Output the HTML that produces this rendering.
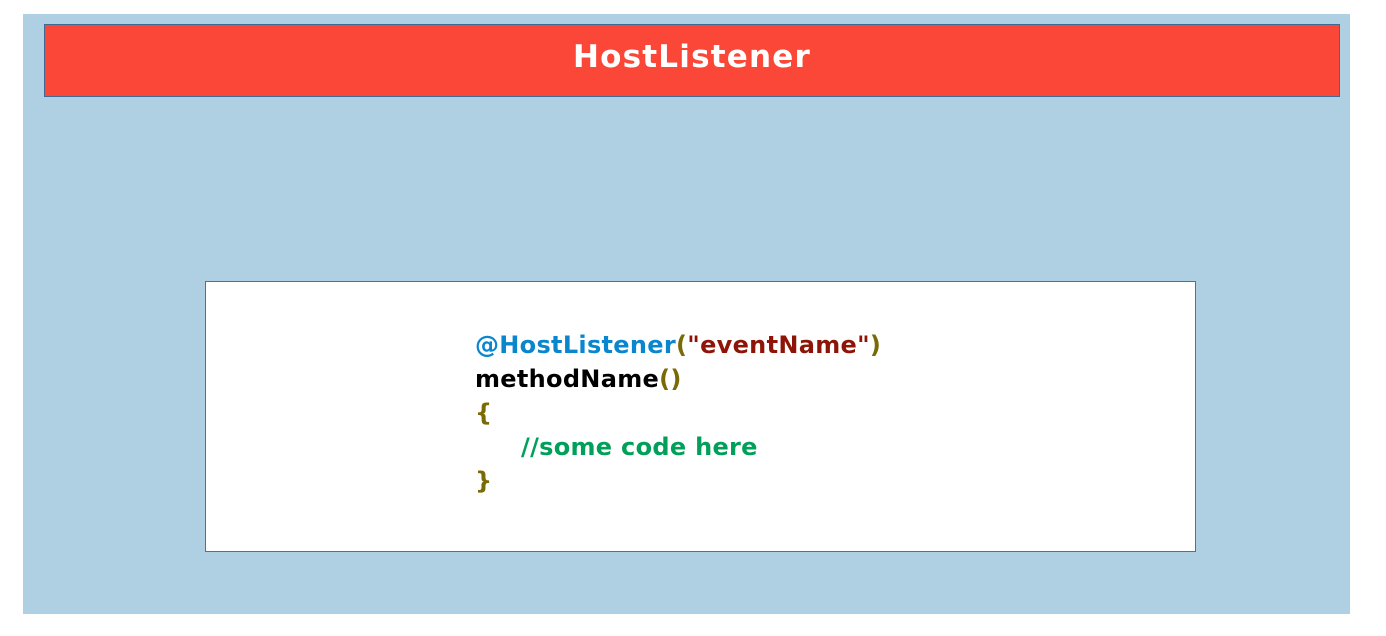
<!DOCTYPE html>
<html><head><style>
body{margin:0;width:1386px;height:636px;background:#fff;position:relative;overflow:hidden;font-family:"DejaVu Sans","Liberation Sans",sans-serif}
.bg{position:absolute;left:23px;top:14px;width:1327px;height:600px;background:#afcfe3}
.bar{position:absolute;left:44px;top:24px;width:1294px;height:71px;background:#fa4737;border:1px solid #3e6a93;color:#fff;font-weight:bold;font-size:31px;letter-spacing:1.2px;text-align:center;line-height:64px}
.box{position:absolute;left:205px;top:281px;width:989px;height:269px;background:#fff;border:1px solid #3a76b0}
.code{position:absolute;left:475px;top:328px;font-weight:bold;font-size:24px;letter-spacing:0.3px;line-height:34px;white-space:pre;color:#000}
.b{color:#0a86cf}.r{color:#8e1408}.o{color:#7a6a06}.g{color:#00a05a;padding-left:46px}
</style></head><body>
<div class="bg"></div>
<div class="bar">HostListener</div>
<div class="box"></div>
<div class="code"><span class="b">@HostListener</span><span class="o">(</span><span class="r">"eventName"</span><span class="o">)</span>
methodName<span class="o">()</span>
<span class="o">{</span>
<span class="g">//some code here</span>
<span class="o">}</span></div>
</body></html>
